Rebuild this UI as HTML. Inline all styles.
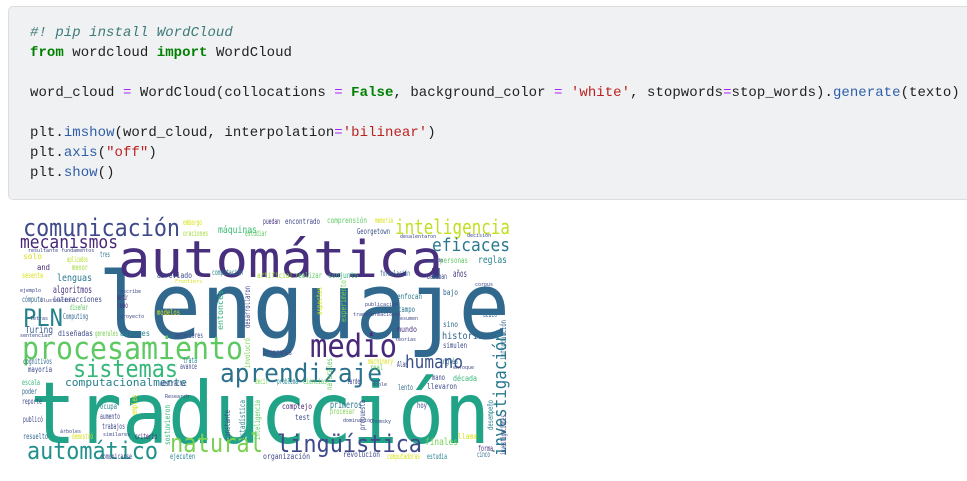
<!DOCTYPE html>
<html><head><meta charset="utf-8"><style>
html,body{margin:0;padding:0;background:#fff;width:967px;height:481px;overflow:hidden}
.cell{position:absolute;left:8px;top:6px;width:975px;height:194px;background:#f0f1f3;border:1px solid #dcdde0;border-radius:5px;box-sizing:border-box}
pre{position:absolute;left:30px;top:23px;margin:0;font-family:"Liberation Mono",monospace;font-size:14px;line-height:20px;color:#212121;letter-spacing:0.05px}
.c{color:#3d7a7a;font-style:italic}.k{color:#008000;font-weight:bold}.o{color:#aa22ff}.s{color:#ba2121}.f{color:#2e5ea8}
svg{position:absolute;left:15px;top:210px}
svg text{font-family:"DejaVu Sans Mono",monospace}
</style></head><body>
<div class="cell"></div>
<pre><span class="c">#! pip install WordCloud</span>
<span class="k">from</span> wordcloud <span class="k">import</span> WordCloud

word_cloud <span class="o">=</span> WordCloud(collocations <span class="o">=</span> <span class="k">False</span>, background_color <span class="o">=</span> <span class="s">'white'</span>, stopwords<span class="o">=</span>stop_words).<span class="f">generate</span>(texto)

plt.<span class="f">imshow</span>(word_cloud, interpolation<span class="o">=</span><span class="s">'bilinear'</span>)
plt.<span class="f">axis</span>(<span class="s">"off"</span>)
plt.<span class="f">show</span>()</pre>
<svg width="500" height="255" viewBox="15 210 500 255" xmlns="http://www.w3.org/2000/svg" style="filter:blur(0.3px)">
<g>
<text x="98" y="338" font-size="92" fill="#31688e" textLength="412" lengthAdjust="spacingAndGlyphs">lenguaje</text>
<text x="30" y="443" font-size="86" fill="#20a386" textLength="460" lengthAdjust="spacingAndGlyphs">traducción</text>
<text x="118" y="277" font-size="51" fill="#472f7d" textLength="325" lengthAdjust="spacingAndGlyphs">automática</text>
<text x="23" y="236" font-size="24" fill="#3e4a89" textLength="157" lengthAdjust="spacingAndGlyphs">comunicación</text>
<text x="395" y="234" font-size="20" fill="#c2df23" textLength="115" lengthAdjust="spacingAndGlyphs">inteligencia</text>
<text x="20" y="248" font-size="18" fill="#482677" textLength="98" lengthAdjust="spacingAndGlyphs">mecanismos</text>
<text x="432" y="251" font-size="18" fill="#2a788e" textLength="78" lengthAdjust="spacingAndGlyphs">eficaces</text>
<text x="23" y="326" font-size="24" fill="#26828e" textLength="40" lengthAdjust="spacingAndGlyphs">PLN</text>
<text x="22" y="359" font-size="31" fill="#5ec962" textLength="221" lengthAdjust="spacingAndGlyphs">procesamiento</text>
<text x="310" y="357" font-size="32" fill="#482878" textLength="87" lengthAdjust="spacingAndGlyphs">medio</text>
<text x="73" y="377" font-size="24" fill="#35b779" textLength="105" lengthAdjust="spacingAndGlyphs">sistemas</text>
<text x="220" y="382" font-size="26" fill="#2c728e" textLength="162" lengthAdjust="spacingAndGlyphs">aprendizaje</text>
<text x="405" y="368" font-size="18" fill="#3b528b" textLength="58" lengthAdjust="spacingAndGlyphs">humano</text>
<text x="170" y="452" font-size="26" fill="#7ad151" textLength="93" lengthAdjust="spacingAndGlyphs">natural</text>
<text x="277" y="452" font-size="24" fill="#3e4989" textLength="145" lengthAdjust="spacingAndGlyphs">lingüística</text>
<text x="27" y="459" font-size="24" fill="#21918c" textLength="131" lengthAdjust="spacingAndGlyphs">automático</text>
<text transform="translate(506,456) rotate(-90)" font-size="18" fill="#2a788e" textLength="124" lengthAdjust="spacingAndGlyphs">investigación</text>
<text x="65" y="386" font-size="11" fill="#277f8e" textLength="122" lengthAdjust="spacingAndGlyphs">computacionalmente</text>
</g>
<g font-size="10">
<text x="218" y="233" fill="#3bbb75" textLength="39" lengthAdjust="spacingAndGlyphs">máquinas</text>
<text x="53" y="293" fill="#46337e" textLength="39" lengthAdjust="spacingAndGlyphs">algoritmos</text>
<text x="57" y="281" fill="#2a788e" textLength="35" lengthAdjust="spacingAndGlyphs">lenguas</text>
<text x="25" y="333" fill="#38598c" textLength="28" lengthAdjust="spacingAndGlyphs">Turing</text>
<text x="442" y="339" fill="#31688e" textLength="41" lengthAdjust="spacingAndGlyphs">historia</text>
<text x="330" y="408" fill="#2a788e" textLength="32" lengthAdjust="spacingAndGlyphs">primeros</text>
<text x="425" y="445" fill="#75d054" textLength="33" lengthAdjust="spacingAndGlyphs">finales</text>
<text x="478" y="263" fill="#26828e" textLength="29" lengthAdjust="spacingAndGlyphs">reglas</text>
<text x="453" y="277" fill="#443a83" textLength="14" lengthAdjust="spacingAndGlyphs">años</text>
</g>
<g font-size="8" fill="#52c569">
<text x="263" y="224" fill="#46337e" textLength="17" lengthAdjust="spacingAndGlyphs">puedan</text>
<text x="285" y="224" fill="#3e4989" textLength="35" lengthAdjust="spacingAndGlyphs">encontrado</text>
<text x="327" y="223" fill="#5ec962" textLength="40" lengthAdjust="spacingAndGlyphs">comprensión</text>
<text x="375" y="223" fill="#d8e219" textLength="18" lengthAdjust="spacingAndGlyphs">memoria</text>
<text x="183" y="225" fill="#d8e219" textLength="19" lengthAdjust="spacingAndGlyphs">embargo</text>
<text x="183" y="236" fill="#a0da39" textLength="25" lengthAdjust="spacingAndGlyphs">oraciones</text>
<text x="245" y="236" fill="#5ec962" textLength="22" lengthAdjust="spacingAndGlyphs">estudiar</text>
<text x="357" y="234" fill="#3b528b" textLength="33" lengthAdjust="spacingAndGlyphs">Georgetown</text>
<text x="23" y="259" fill="#d8e219" textLength="19" lengthAdjust="spacingAndGlyphs">solo</text>
<text x="67" y="262" fill="#b5de2b" textLength="21" lengthAdjust="spacingAndGlyphs">aplicados</text>
<text x="100" y="257" fill="#2a788e" textLength="10" lengthAdjust="spacingAndGlyphs">tres</text>
<text x="37" y="270" fill="#482677" textLength="13" lengthAdjust="spacingAndGlyphs">and</text>
<text x="72" y="270" fill="#a0da39" textLength="16" lengthAdjust="spacingAndGlyphs">menor</text>
<text x="22" y="278" fill="#d8e219" textLength="21" lengthAdjust="spacingAndGlyphs">sesenta</text>
<text x="157" y="278" fill="#3e4a89" textLength="35" lengthAdjust="spacingAndGlyphs">abreviado</text>
<text x="212" y="275" fill="#26828e" textLength="31" lengthAdjust="spacingAndGlyphs">computación</text>
<text x="257" y="278" fill="#a0da39" textLength="36" lengthAdjust="spacingAndGlyphs">artificial</text>
<text x="295" y="278" fill="#5ec962" textLength="27" lengthAdjust="spacingAndGlyphs">realizar</text>
<text x="328" y="278" fill="#35b779" textLength="30" lengthAdjust="spacingAndGlyphs">conjunto</text>
<text x="380" y="276" fill="#31688e" textLength="30" lengthAdjust="spacingAndGlyphs">formulación</text>
<text x="427" y="279" fill="#3e4989" textLength="20" lengthAdjust="spacingAndGlyphs">basaban</text>
<text x="440" y="263" fill="#5ec962" textLength="28" lengthAdjust="spacingAndGlyphs">personas</text>
<text x="22" y="302" fill="#31688e" textLength="21" lengthAdjust="spacingAndGlyphs">cómputo</text>
<text x="53" y="302" fill="#3e4a89" textLength="49" lengthAdjust="spacingAndGlyphs">interacciones</text>
<text x="117" y="300" fill="#482677" textLength="11" lengthAdjust="spacingAndGlyphs">partir</text>
<text x="117" y="308" fill="#46337e" textLength="11" lengthAdjust="spacingAndGlyphs">cabo</text>
<text x="70" y="310" fill="#5ec962" textLength="18" lengthAdjust="spacingAndGlyphs">diseñar</text>
<text x="63" y="319" fill="#31688e" textLength="25" lengthAdjust="spacingAndGlyphs">Computing</text>
<text x="157" y="315" fill="#d8e219" textLength="23" lengthAdjust="spacingAndGlyphs">modelos</text>
<text x="58" y="336" fill="#3e4989" textLength="35" lengthAdjust="spacingAndGlyphs">diseñadas</text>
<text x="95" y="336" fill="#7ad151" textLength="23" lengthAdjust="spacingAndGlyphs">generales</text>
<text x="120" y="336" fill="#26828e" textLength="30" lengthAdjust="spacingAndGlyphs">autores</text>
<text x="175" y="338" fill="#3e4a89" textLength="28" lengthAdjust="spacingAndGlyphs">anteriores</text>
<text transform="translate(223,330) rotate(-90)" fill="#2ab07f" textLength="40" lengthAdjust="spacingAndGlyphs">entonces</text>
<text transform="translate(250,328) rotate(-90)" fill="#3e4a89" textLength="42" lengthAdjust="spacingAndGlyphs">desarrollaron</text>
<text transform="translate(322,315) rotate(-90)" fill="#d8e219" textLength="28" lengthAdjust="spacingAndGlyphs">aspectos</text>
<text transform="translate(346,322) rotate(-90)" fill="#75d054" textLength="42" lengthAdjust="spacingAndGlyphs">experimento</text>
<text x="398" y="312" fill="#2a788e" textLength="17" lengthAdjust="spacingAndGlyphs">campo</text>
<text x="397" y="299" fill="#2a788e" textLength="25" lengthAdjust="spacingAndGlyphs">enfocan</text>
<text x="443" y="295" fill="#31688e" textLength="15" lengthAdjust="spacingAndGlyphs">bajo</text>
<text x="483" y="317" fill="#31688e" textLength="14" lengthAdjust="spacingAndGlyphs">debió</text>
<text x="443" y="327" fill="#31688e" textLength="15" lengthAdjust="spacingAndGlyphs">sino</text>
<text x="397" y="332" fill="#46337e" textLength="20" lengthAdjust="spacingAndGlyphs">mundo</text>
<text x="443" y="348" fill="#3e4989" textLength="24" lengthAdjust="spacingAndGlyphs">simulen</text>
<text x="368" y="364" fill="#d8e219" textLength="25" lengthAdjust="spacingAndGlyphs">machinery</text>
<text x="440" y="364" fill="#31688e" textLength="18" lengthAdjust="spacingAndGlyphs">inglés</text>
<text x="370" y="370" fill="#5ec962" textLength="13" lengthAdjust="spacingAndGlyphs">real</text>
<text x="397" y="367" fill="#3e4989" textLength="11" lengthAdjust="spacingAndGlyphs">Alan</text>
<text x="432" y="380" fill="#3e4989" textLength="13" lengthAdjust="spacingAndGlyphs">mano</text>
<text x="453" y="381" fill="#35b779" textLength="24" lengthAdjust="spacingAndGlyphs">década</text>
<text x="427" y="389" fill="#3e4989" textLength="30" lengthAdjust="spacingAndGlyphs">llevaron</text>
<text x="398" y="390" fill="#31688e" textLength="15" lengthAdjust="spacingAndGlyphs">lento</text>
<text x="417" y="408" fill="#3e4989" textLength="10" lengthAdjust="spacingAndGlyphs">hoy</text>
<text x="330" y="414" fill="#7ad151" textLength="25" lengthAdjust="spacingAndGlyphs">procesar</text>
<text x="282" y="409" fill="#482677" textLength="30" lengthAdjust="spacingAndGlyphs">complejo</text>
<text x="295" y="420" fill="#3e4989" textLength="15" lengthAdjust="spacingAndGlyphs">test</text>
<text x="303" y="384" fill="#5ec962" textLength="24" lengthAdjust="spacingAndGlyphs">ciencias</text>
<text x="277" y="384" fill="#26828e" textLength="21" lengthAdjust="spacingAndGlyphs">problema</text>
<text x="347" y="384" fill="#3e4989" textLength="13" lengthAdjust="spacingAndGlyphs">tarde</text>
<text x="255" y="384" fill="#7ad151" textLength="13" lengthAdjust="spacingAndGlyphs">decir</text>
<text x="263" y="355" fill="#3e4a89" textLength="29" lengthAdjust="spacingAndGlyphs">programas</text>
<text x="183" y="363" fill="#26828e" textLength="14" lengthAdjust="spacingAndGlyphs">trata</text>
<text x="180" y="369" fill="#3e4989" textLength="17" lengthAdjust="spacingAndGlyphs">avance</text>
<text x="160" y="386" fill="#3e4989" textLength="25" lengthAdjust="spacingAndGlyphs">abstracta</text>
<text x="23" y="364" fill="#31688e" textLength="29" lengthAdjust="spacingAndGlyphs">cognitivos</text>
<text x="28" y="372" fill="#3e4a89" textLength="24" lengthAdjust="spacingAndGlyphs">mayoria</text>
<text x="22" y="385" fill="#35b779" textLength="18" lengthAdjust="spacingAndGlyphs">escala</text>
<text x="22" y="394" fill="#31688e" textLength="15" lengthAdjust="spacingAndGlyphs">poder</text>
<text x="22" y="404" fill="#3e4989" textLength="20" lengthAdjust="spacingAndGlyphs">reporte</text>
<text x="23" y="422" fill="#3e4a89" textLength="20" lengthAdjust="spacingAndGlyphs">publicó</text>
<text x="23" y="439" fill="#31688e" textLength="25" lengthAdjust="spacingAndGlyphs">resuelto</text>
<text x="100" y="409" fill="#26828e" textLength="17" lengthAdjust="spacingAndGlyphs">ocupa</text>
<text x="100" y="419" fill="#3e4989" textLength="20" lengthAdjust="spacingAndGlyphs">aumento</text>
<text x="102" y="429" fill="#3e4989" textLength="23" lengthAdjust="spacingAndGlyphs">trabajos</text>
<text x="135" y="439" fill="#482677" textLength="22" lengthAdjust="spacingAndGlyphs">criterio</text>
<text x="72" y="439" fill="#d8e219" textLength="21" lengthAdjust="spacingAndGlyphs">demostró</text>
<text x="100" y="459" fill="#3e4989" textLength="32" lengthAdjust="spacingAndGlyphs">comunicarse</text>
<text x="170" y="459" fill="#26828e" textLength="25" lengthAdjust="spacingAndGlyphs">ejecuten</text>
<text x="263" y="459" fill="#3e4989" textLength="47" lengthAdjust="spacingAndGlyphs">organización</text>
<text x="343" y="457" fill="#3e4989" textLength="37" lengthAdjust="spacingAndGlyphs">revolución</text>
<text x="387" y="459" fill="#d8e219" textLength="33" lengthAdjust="spacingAndGlyphs">computadoras</text>
<text x="427" y="459" fill="#26828e" textLength="20" lengthAdjust="spacingAndGlyphs">estudia</text>
<text x="477" y="457" fill="#31688e" textLength="13" lengthAdjust="spacingAndGlyphs">cinco</text>
<text x="478" y="451" fill="#46337e" textLength="15" lengthAdjust="spacingAndGlyphs">forma</text>
<text x="458" y="439" fill="#d8e219" textLength="19" lengthAdjust="spacingAndGlyphs">llama</text>
<text transform="translate(260,440) rotate(-90)" fill="#5ec962" textLength="40" lengthAdjust="spacingAndGlyphs">inteligencia</text>
<text transform="translate(245,440) rotate(-90)" fill="#26828e" textLength="40" lengthAdjust="spacingAndGlyphs">estadística</text>
<text transform="translate(230,440) rotate(-90)" fill="#3e4989" textLength="30" lengthAdjust="spacingAndGlyphs">constante</text>
<text transform="translate(170,445) rotate(-90)" fill="#35b779" textLength="40" lengthAdjust="spacingAndGlyphs">sostuvieron</text>
<text transform="translate(137,415) rotate(-90)" fill="#d8e219" textLength="20" lengthAdjust="spacingAndGlyphs">empleo</text>
<text transform="translate(332,390) rotate(-90)" fill="#5ec962" textLength="32" lengthAdjust="spacingAndGlyphs">naturales</text>
<text transform="translate(250,368) rotate(-90)" fill="#7ad151" textLength="30" lengthAdjust="spacingAndGlyphs">involucró</text>
<text transform="translate(365,430) rotate(-90)" fill="#3e4989" textLength="30" lengthAdjust="spacingAndGlyphs">propuesta</text>
<text transform="translate(506,360) rotate(-90)" fill="#31688e" textLength="40" lengthAdjust="spacingAndGlyphs">introducción</text>
<text transform="translate(506,455) rotate(-90)" fill="#3e4989" textLength="40" lengthAdjust="spacingAndGlyphs">investigaciones</text>
<text transform="translate(493,430) rotate(-90)" fill="#26828e" textLength="30" lengthAdjust="spacingAndGlyphs">desempeño</text>
</g>
<g font-size="5" fill="#3e4989">
<text x="28" y="252">resultante fundamentos</text><text x="175" y="283" fill="#d8e219">Frontiers</text>
<text x="20" y="292">ejemplo</text><text x="40" y="302">ilustración</text><text x="120" y="293">escribe</text>
<text x="120" y="318">proyecto</text><text x="30" y="320">letras</text><text x="20" y="337">sentencias</text>
<text x="365" y="306">publicación</text><text x="397" y="320">resumen</text><text x="395" y="341">teorías</text>
<text x="467" y="237">decisión</text><text x="400" y="238">desalentaron</text><text x="428" y="262">puede</text>
<text x="475" y="286">corpus</text><text x="353" y="316">transformacional</text><text x="372" y="386">doble</text>
<text x="343" y="422">dominación</text><text x="370" y="423">Chomsky</text><text x="453" y="369">enfoque</text>
<text x="60" y="433">árboles</text><text x="103" y="436">similares</text><text x="165" y="398">Research</text>
</g>
</svg>
</body></html>
